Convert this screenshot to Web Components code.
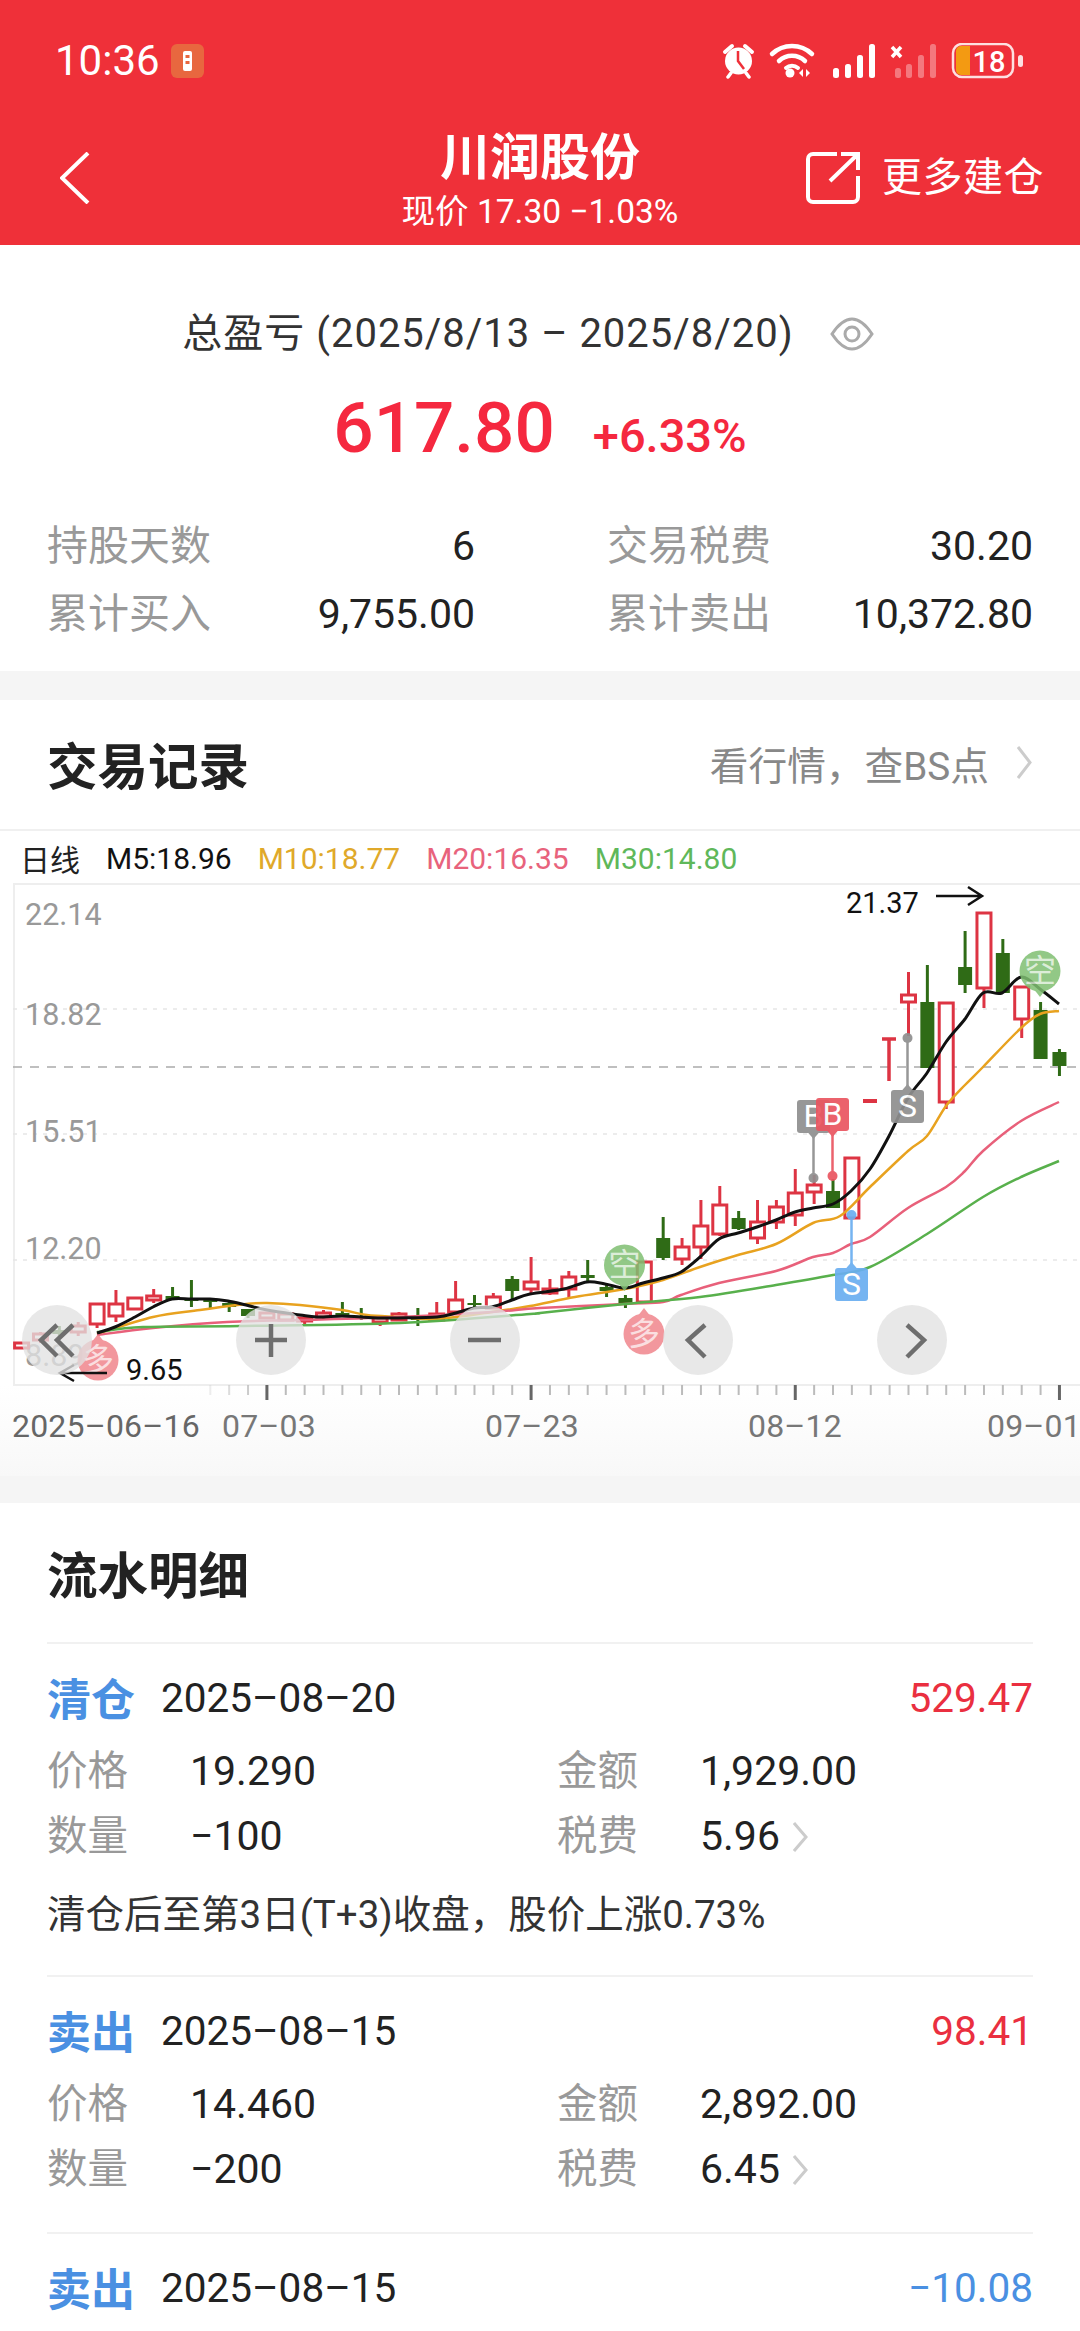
<!DOCTYPE html>
<html lang="zh">
<head>
<meta charset="utf-8">
<title>川润股份</title>
<style>
  html, body { margin: 0; background: #fff; }
  body {
    width: 1080px;
    height: 2331px;
    overflow: hidden;
    font-family: Roboto, "Noto Sans CJK SC", sans-serif;
    color: #222;
  }
  .gap { height: 29px; background: #f5f5f5; }
  .gap.low { height: 27px; }
</style>
</head>
<body>
  <app-header></app-header>
  <pnl-summary></pnl-summary>
  <div class="gap"></div>
  <section-head link="看行情，查BS点">交易记录</section-head>
  <kline-chart></kline-chart>
  <div class="gap low"></div>
  <flow-list>
    <flow-record bottom="37">
      <span slot="kind">清仓</span>
      <span slot="date">2025–08–20</span>
      <span slot="amount" style="color:#ea2f40">529.47</span>
      <span slot="price">19.290</span>
      <span slot="total">1,929.00</span>
      <span slot="qty">−100</span>
      <span slot="fee">5.96</span>
      <span slot="note">清仓后至第3日(T+3)收盘，股价上涨0.73%</span>
    </flow-record>
    <flow-record bottom="30">
      <span slot="kind">卖出</span>
      <span slot="date">2025–08–15</span>
      <span slot="amount" style="color:#ea2f40">98.41</span>
      <span slot="price">14.460</span>
      <span slot="total">2,892.00</span>
      <span slot="qty">−200</span>
      <span slot="fee">6.45</span>
    </flow-record>
    <flow-record head-only>
      <span slot="kind">卖出</span>
      <span slot="date">2025–08–15</span>
      <span slot="amount" style="color:#4a90e2">−10.08</span>
    </flow-record>
  </flow-list>

<script>
// top red block: status bar + title bar
const headerTemplate = document.createElement('template');
headerTemplate.innerHTML = `
  <style>
    :host { display: block; height: 245px; background: #ef3039; color: #fff; }
    .status { height: 122px; box-sizing: border-box; display: flex; align-items: center; padding: 0 57px 0 55px; }
    .time { font-size: 42px; line-height: 48px; }
    .note { margin-left: 11px; display: block; }
    .icons { margin-left: auto; display: flex; align-items: center; gap: 0; }
    svg { display: block; }
    .nav { display: grid; grid-template-columns: 1fr auto 1fr; height: 123px; }
    .back { padding: 30px 0 0 60px; }
    .mid { text-align: center; }
    .name { font-size: 50px; line-height: 58px; font-weight: 700; margin-top: 7px; }
    .sub { font-size: 33.5px; line-height: 40px; margin-top: 5px; }
    .more { display: flex; align-items: flex-start; justify-content: flex-end; padding: 30px 36px 0 0; gap: 22px; }
    .more span { font-size: 40px; line-height: 52px; letter-spacing: 0.5px; }
  </style>
  <div class="status">
    <span class="time">10:36</span>
    <svg class="note" width="33" height="34" viewBox="0 0 33 34">
      <rect width="33" height="34" rx="6" fill="#e8673f"/>
      <rect x="12" y="7" width="9" height="20" rx="2" fill="#fff"/>
      <rect x="14.5" y="11" width="4" height="3" fill="#e8673f"/>
      <rect x="14.5" y="17" width="4" height="3" fill="#e8673f"/>
    </svg>
    <div class="icons">
      <svg width="301" height="36" viewBox="722 44 301 36">
        <!-- alarm -->
        <path d="M725 53 l7-6" stroke="#fff" stroke-width="4" stroke-linecap="round"/>
        <path d="M752 53 l-7-6" stroke="#fff" stroke-width="4" stroke-linecap="round"/>
        <circle cx="738.5" cy="62" r="13.5" fill="#fff"/>
        <path d="M738 52 v10 l6 8" fill="none" stroke="#ef3039" stroke-width="2.5"/>
        <path d="M728 78 l3-4 M749 78 l-3-4" stroke="#fff" stroke-width="3.5" stroke-linecap="round"/>
        <!-- wifi -->
        <path d="M772 55 a29 29 0 0 1 40 0" fill="none" stroke="#fff" stroke-width="4.5" stroke-linecap="round"/>
        <path d="M779 62 a19 19 0 0 1 26 0" fill="none" stroke="#fff" stroke-width="4.5" stroke-linecap="round"/>
        <path d="M786 69 a9 9 0 0 1 12 0" fill="none" stroke="#fff" stroke-width="4" stroke-linecap="round"/>
        <circle cx="790" cy="74" r="4.5" fill="#fff"/>
        <path d="M803 70 l-4 4 4 4z M806 70 l4 4 -4 4z" fill="#fff"/>
        <!-- signal 1 -->
        <g fill="#fff">
          <rect x="833" y="69" width="6" height="10" rx="2.5"/>
          <rect x="845" y="65" width="6" height="14" rx="2.5"/>
          <rect x="857" y="56" width="6" height="23" rx="2.5"/>
          <rect x="869" y="45" width="6" height="34" rx="2.5"/>
        </g>
        <!-- signal 2, no service -->
        <g fill="#fff" opacity=".35">
          <rect x="895" y="69" width="6" height="10" rx="2.5"/>
          <rect x="906" y="65" width="6" height="14" rx="2.5"/>
          <rect x="918" y="56" width="6" height="23" rx="2.5"/>
          <rect x="930" y="45" width="6" height="34" rx="2.5"/>
        </g>
        <path d="M892 48 l9 10 M901 48 l-9 10" stroke="#fff" stroke-width="3.5"/>
        <!-- battery -->
        <rect x="953" y="45" width="60" height="33" rx="9" fill="none" stroke="#fff" stroke-opacity=".85" stroke-width="2.5"/>
        <path d="M956 52 a5 5 0 0 1 5-5 h9 v29 h-9 a5 5 0 0 1 -5-5z" fill="#f39a12"/>
        <rect x="1018" y="56" width="5" height="12" rx="2.5" fill="#fff" fill-opacity=".85"/>
        <text x="989" y="73" text-anchor="middle" font-size="29" font-weight="500" fill="#fff" font-family="Roboto, sans-serif">18</text>
      </svg>
    </div>
  </div>
  <div class="nav">
    <div class="back">
      <svg width="30" height="52" viewBox="0 0 30 52"><path d="M28 1 L2 26 L28 51" fill="none" stroke="#fff" stroke-width="4"/></svg>
    </div>
    <div class="mid">
      <div class="name">川润股份</div>
      <div class="sub">现价 17.30 −1.03%</div>
    </div>
    <div class="more">
      <svg width="54" height="52" viewBox="0 0 54 52">
        <path d="M31 2 H7 a5 5 0 0 0 -5 5 v38 a5 5 0 0 0 5 5 h40 a5 5 0 0 0 5-5 V24" fill="none" stroke="#fff" stroke-width="4"/>
        <path d="M24 29 L51 3 M35 2 H52 V18" fill="none" stroke="#fff" stroke-width="4"/>
      </svg>
      <span>更多建仓</span>
    </div>
  </div>`;

class AppHeader extends HTMLElement {
  constructor() {
    super();
    this.attachShadow({ mode: 'open' });
    this.shadowRoot.appendChild(headerTemplate.content.cloneNode(true));
  }
}
customElements.define('app-header', AppHeader);

// total profit block
const summaryTemplate = document.createElement('template');
summaryTemplate.innerHTML = `
  <style>
    :host { display: block; height: 426px; box-sizing: border-box; padding-top: 64px; background: #fff; }
    .range { display: flex; justify-content: center; align-items: center; gap: 36px; padding-right: 24px; font-size: 40px; line-height: 50px; letter-spacing: 1px; color: #333; }
    .money { display: flex; justify-content: center; align-items: baseline; gap: 38px; margin-top: 24px; height: 90px; color: #f5283f; font-weight: 500; }
    .big { font-size: 71px; line-height: 90px; }
    .pct { font-size: 47px; }
    .stats { display: grid; grid-template-columns: 428px 426px; column-gap: 132px; margin: 39px 47px 0 47px; }
    .cell { display: flex; justify-content: space-between; font-size: 41px; line-height: 68px; color: #222; }
    .cell i { font-style: normal; color: #999; }
  </style>
  <div class="range">
    <span>总盈亏 (2025/8/13 – 2025/8/20)</span>
    <svg width="44" height="34" viewBox="0 0 44 34">
      <path d="M2 17 C10 5 16 2 22 2 S34 5 42 17 C34 29 28 32 22 32 S10 29 2 17z" fill="none" stroke="#aaa" stroke-width="3"/>
      <circle cx="22" cy="17" r="7" fill="none" stroke="#aaa" stroke-width="3"/>
    </svg>
  </div>
  <div class="money"><span class="big">617.80</span><span class="pct">+6.33%</span></div>
  <div class="stats">
    <div class="cell"><i>持股天数</i><span>6</span></div>
    <div class="cell"><i>交易税费</i><span>30.20</span></div>
    <div class="cell"><i>累计买入</i><span>9,755.00</span></div>
    <div class="cell"><i>累计卖出</i><span>10,372.80</span></div>
  </div>`;

class PnlSummary extends HTMLElement {
  constructor() {
    super();
    this.attachShadow({ mode: 'open' });
    this.shadowRoot.appendChild(summaryTemplate.content.cloneNode(true));
  }
}
customElements.define('pnl-summary', PnlSummary);

// section title row, with optional link on the right
const headTemplate = document.createElement('template');
headTemplate.innerHTML = `
  <style>
    :host { display: flex; align-items: center; justify-content: space-between; height: 129px; box-sizing: border-box; padding: 0 48px 4px 47px; background: #fff; }
    .title { font-size: 50.5px; font-weight: 700; color: #222; }
    .link { display: flex; align-items: center; gap: 28px; font-size: 38.7px; color: #888; }
  </style>
  <div class="title"><slot></slot></div>
  <div class="link">
    <span class="txt"></span>
    <svg width="15" height="33" viewBox="0 0 15 33"><path d="M1 1 L13 16.5 L1 32" fill="none" stroke="#ccc" stroke-width="3"/></svg>
  </div>`;

class SectionHead extends HTMLElement {
  constructor() {
    super();
    this.attachShadow({ mode: 'open' });
    this.shadowRoot.appendChild(headTemplate.content.cloneNode(true));
    this.shadowRoot.querySelector('.txt').textContent = this.getAttribute('link');
  }
}
customElements.define('section-head', SectionHead);

// k-line data, in page pixels
// [index, colour, wick top, body top, body bottom, wick bottom]
const CANDLES = [
  [0,'r',1343,1343,1348,1348],[1,'r',1332,1334,1340,1343],[2,'g',1326,1330,1334,1338],[3,'r',1322,1326,1332,1336],
  [4,'r',1304,1304,1324,1328],[5,'r',1290,1304,1316,1322],[6,'r',1298,1298,1309,1309],[7,'r',1289,1296,1300,1303],
  [8,'g',1287,1296,1300,1300],[9,'g',1280,1299,1300,1307],[10,'g',1298,1300,1302,1308],[11,'g',1302,1303,1307,1312],
  [12,'g',1309,1309,1316,1318],[13,'r',1313,1313,1318,1318],[14,'r',1314,1314,1320,1320],[15,'r',1316,1318,1321,1324],
  [16,'r',1310,1313,1317,1320],[17,'g',1302,1313,1316,1317],[18,'g',1308,1316,1318,1320],[19,'r',1316,1318,1322,1326],
  [20,'r',1312,1314,1320,1320],[21,'g',1308,1316,1320,1326],[22,'r',1302,1314,1320,1320],[23,'r',1281,1300,1312,1312],
  [24,'g',1295,1303,1305,1308],[25,'r',1293,1297,1308,1308],[26,'g',1276,1279,1291,1300],[27,'r',1257,1282,1289,1293],
  [28,'r',1279,1289,1293,1295],[29,'r',1271,1277,1289,1297],[30,'g',1260,1275,1278,1283],[31,'g',1283,1287,1291,1297],
  [32,'g',1295,1298,1304,1308],[33,'r',1262,1262,1302,1302],[34,'g',1217,1238,1258,1260],[35,'r',1238,1247,1259,1265],
  [36,'r',1200,1226,1247,1259],[37,'r',1186,1205,1234,1236],[38,'g',1211,1218,1229,1230],[39,'r',1200,1222,1238,1244],
  [40,'r',1200,1207,1222,1229],[41,'r',1169,1193,1215,1226],[42,'r',1175,1185,1192,1204],[43,'g',1179,1191,1208,1208],
  [44,'r',1158,1158,1218,1218],[47,'r',972,995,1002,1036],[48,'g',965,1002,1068,1068],[49,'r',1003,1003,1102,1109],
  [50,'g',931,967,985,993],[51,'r',913,913,988,1008],[52,'g',939,953,993,993],[53,'r',987,987,1019,1038],
  [54,'g',1002,1010,1059,1059],[55,'g',1049,1052,1066,1076]
];
const MA_LINES = {
  '#e8a21f': '97,1334 153,1317 200,1310 246,1304 267,1303 300,1305 342,1310 367,1315 400,1317 437,1319 492,1312 530,1306 575,1297 625,1289 663,1280 700,1267 738,1255 776,1244 813,1223 840,1216 870,1187 908,1151 927,1136 946,1106 965,1085 983,1067 1021,1028 1040,1014 1059,1011',
  '#e8607a': '97,1335 153,1328 227,1322 300,1320 400,1317 492,1312 540,1308 625,1304 663,1302 681,1295 719,1283 776,1271 813,1257 833,1253 851,1244 870,1237 908,1208 946,1187 965,1171 983,1151 1021,1121 1059,1102',
  '#58b04c': '97,1332 143,1327 240,1326 400,1323 530,1314 540,1313 625,1304 700,1297 776,1285 833,1275 870,1267 927,1234 983,1197 1021,1177 1059,1161',
  '#111': '97,1333 115,1327 135,1317 153,1307 172,1299 191,1299 210,1299 228,1301 246,1305 267,1310 300,1315 317,1317 342,1316 361,1317 380,1318 398,1318 437,1317 456,1313 474,1308 492,1307 512,1300 530,1294 564,1289 587,1282 605,1284 625,1288 643,1283 663,1278 681,1272 700,1257 719,1239 738,1233 757,1227 776,1220 795,1212 813,1208 833,1204 851,1191 870,1169 889,1136 908,1098 927,1073 946,1042 965,1019 983,993 1002,993 1021,977 1040,989 1059,1004'
};
const CX = i => 21.6 + 18.87 * i;

// catmull-rom through the points, the chart lines are curves
function smoothPath(pts) {
  const p = pts.split(' ').map(s => s.split(',').map(Number));
  let d = `M${p[0][0]} ${p[0][1]}`;
  for (let i = 0; i < p.length - 1; i++) {
    const a = p[i - 1] || p[i], b = p[i], c = p[i + 1], e = p[i + 2] || c;
    const c1x = b[0] + (c[0] - a[0]) / 6, c1y = b[1] + (c[1] - a[1]) / 6;
    const c2x = c[0] - (e[0] - b[0]) / 6, c2y = c[1] - (e[1] - b[1]) / 6;
    d += `C${c1x.toFixed(1)} ${c1y.toFixed(1)} ${c2x.toFixed(1)} ${c2y.toFixed(1)} ${c[0]} ${c[1]}`;
  }
  return d;
}

function candleSvg([i, c, wt, bt, bb, wb]) {
  const x = CX(i);
  if (c === 'g') {
    return `<path d="M${x} ${wt}V${wb}" stroke="#2f6b16" stroke-width="3"/>` +
      `<rect x="${x - 7}" y="${bt}" width="14" height="${Math.max(bb - bt, 2)}" fill="#2f6b16"/>`;
  }
  return `<path d="M${x} ${wt}V${wb}" stroke="#dd3443" stroke-width="3"/>` +
    `<rect x="${x - 7}" y="${bt}" width="14" height="${Math.max(bb - bt, 2)}" fill="#fff" stroke="#dd3443" stroke-width="3"/>`;
}

function flagSvg(x, y, label, color, dotY, tipUp) {
  const cx = x + 16.5;
  const line = `<path d="M${cx} ${tipUp ? dotY : y + 33}V${tipUp ? y : dotY}" stroke="${color}" stroke-width="2.5"/>` +
    `<circle cx="${cx}" cy="${dotY}" r="5" fill="${color}"/>`;
  const tip = tipUp
    ? `<path d="M${cx - 6} ${y + 1} L${cx} ${y - 6} L${cx + 6} ${y + 1}z" fill="${color}"/>`
    : `<path d="M${cx - 6} ${y + 32} L${cx} ${y + 39} L${cx + 6} ${y + 32}z" fill="${color}"/>`;
  return `<g opacity=".92">${line}${tip}<rect x="${x}" y="${y}" width="33" height="33" rx="3" fill="${color}"/>` +
    `<text x="${cx}" y="${y + 27}" text-anchor="middle" font-size="32" fill="#fff">${label}</text></g>`;
}

function bubbleSvg(x, y, label, color, tipUp) {
  const tip = tipUp
    ? `<path d="M${x - 7} ${y - 17} L${x} ${y - 26} L${x + 7} ${y - 17}z" fill="${color}"/>`
    : `<path d="M${x - 7} ${y + 17} L${x} ${y + 26} L${x + 7} ${y + 17}z" fill="${color}"/>`;
  return `<g opacity=".85">${tip}<circle cx="${x}" cy="${y}" r="20.5" fill="${color}"/>` +
    `<text x="${x}" y="${y + 11}" text-anchor="middle" font-size="32" fill="#fff" fill-opacity=".7">${label}</text></g>`;
}

class KlineChart extends HTMLElement {
  constructor() {
    super();
    this.attachShadow({ mode: 'open' });
    const grid = [1009, 1134, 1260].map(y =>
      `<path d="M13 ${y}H1080" stroke="#e6e6e6" stroke-width="1.5" stroke-dasharray="4 6"/>`).join('');
    const lines = Object.entries(MA_LINES).map(([color, pts]) =>
      `<path d="${smoothPath(pts)}" fill="none" stroke="${color}" stroke-width="${color === '#111' ? 3 : 2.5}" stroke-linejoin="round"/>`).join('');
    let ticks = '';
    for (let i = 10; i <= 55; i++) {
      const major = i === 13 || i === 27 || i === 41 || i === 55;
      const op = major ? 1 : Math.min(1, (i - 9) / 4);
      ticks += `<path d="M${CX(i)} 1385V${major ? 1400 : 1395}" stroke="${major ? '#666' : '#bbb'}" stroke-width="${major ? 3 : 2}" opacity="${op}"/>`;
    }
    const yLabels = [['22.14', 925], ['18.82', 1025], ['15.51', 1142], ['12.20', 1259], ['8.89', 1366]]
      .map(([t, y]) => `<text x="25" y="${y}" font-size="30.5" fill="#999">${t}</text>`).join('');
    const xLabels = [['2025–06–16', 12, '#666'], ['07–03', 222, '#777'], ['07–23', 485, '#777'], ['08–12', 748, '#777'], ['09–01', 987, '#777']]
      .map(([t, x, c]) => `<text x="${x}" y="1437" font-size="32" fill="${c}" letter-spacing=".2">${t}</text>`).join('');
    const btn = x => `<circle cx="${x}" cy="1340" r="35" fill="#e2e2e2" fill-opacity=".78"/>`;
    const icon = d => `<path d="${d}" fill="none" stroke="#6e6e6e" stroke-width="4.5"/>`;

    this.shadowRoot.innerHTML = `
      <style>
        :host { display: block; background: #fff; border-top: 2px solid #f0f0f0; box-sizing: border-box; height: 647px; }
        .legend { display: flex; align-items: center; gap: 26px; height: 52px; padding: 2px 0 0 20px; box-sizing: border-box; font-size: 30px; color: #222; }
        svg { display: block; font-family: Roboto, "Noto Sans CJK SC", sans-serif; }
      </style>
      <div class="legend">
        <span>日线</span>
        <span style="color:#111">M5:18.96</span>
        <span style="color:#e0a92a">M10:18.77</span>
        <span style="color:#e8637c">M20:16.35</span>
        <span style="color:#5fb85a">M30:14.80</span>
      </div>
      <svg width="1080" height="593" viewBox="0 883 1080 593">
        <defs><linearGradient id="axis" x1="0" y1="0" x2="0" y2="1"><stop offset="0" stop-color="#fff"/><stop offset="1" stop-color="#f8f8f8"/></linearGradient></defs>
        <rect x="0" y="1385" width="1080" height="91" fill="url(#axis)"/>
        <path d="M1080 884H14V1385H1080" fill="none" stroke="#eee" stroke-width="2"/>
        ${grid}
        <path d="M13 1067H1080" stroke="#aaa" stroke-width="1.5" stroke-dasharray="9 8"/>
        ${yLabels}
        ${CANDLES.map(candleSvg).join('')}
        <path d="M863 1101H877" stroke="#dd3443" stroke-width="4"/>
        <path d="M882 1039H896 M889 1039V1081" stroke="#dd3443" stroke-width="3.5" fill="none"/>
        ${lines}
        ${bubbleSvg(624.5, 1265, '空', '#7fbf72', false)}
        ${bubbleSvg(1040, 971, '空', '#7fbf72', false)}
        ${bubbleSvg(644, 1334, '多', '#f0868d', true)}
        ${bubbleSvg(98, 1360, '多', '#f0868d', true)}
        ${flagSvg(797, 1100, 'B', '#8f8f8f', 1178, false)}
        ${flagSvg(816, 1098, 'B', '#ea5560', 1176, false)}
        ${flagSvg(891, 1090, 'S', '#8f8f8f', 1038, true)}
        ${flagSvg(835, 1268, 'S', '#6aaef0', 1215, true)}
        <text x="846" y="913" font-size="29" fill="#111">21.37</text>
        <path d="M936 896H982 M968 887L982 896L968 905" fill="none" stroke="#111" stroke-width="2.5"/>
        <text x="126" y="1380" font-size="29" fill="#111">9.65</text>
        <path d="M107 1373H60 M74 1365L60 1373L74 1381" fill="none" stroke="#111" stroke-width="2.5"/>
        ${btn(57)}${btn(271)}${btn(485)}${btn(698)}${btn(912)}
        ${icon('M57 1325L41 1340L57 1356 M73 1325L57 1340L73 1356')}
        ${icon('M255 1340H287 M271 1324V1357')}
        ${icon('M468 1340H501')}
        ${icon('M705 1325L688 1340L705 1357')}
        ${icon('M907 1325L924 1340L907 1357')}
        ${ticks}
        ${xLabels}
      </svg>`;
  }
}
customElements.define('kline-chart', KlineChart);

// list block with its title
const listTemplate = document.createElement('template');
listTemplate.innerHTML = `
  <style>
    :host { display: block; background: #fff; padding: 0 47px 0 47px; }
    .title { height: 139px; box-sizing: border-box; padding-bottom: 2px; display: flex; align-items: center; font-size: 50.5px; font-weight: 700; color: #222; }
  </style>
  <div class="title">流水明细</div>
  <slot></slot>`;

class FlowList extends HTMLElement {
  constructor() {
    super();
    this.attachShadow({ mode: 'open' });
    this.shadowRoot.appendChild(listTemplate.content.cloneNode(true));
  }
}
customElements.define('flow-list', FlowList);

// one trade row
const recordTemplate = document.createElement('template');
recordTemplate.innerHTML = `
  <style>
    :host { display: block; border-top: 2px solid #f1f1f1; padding-top: 26px; font-size: 40.5px; color: #222; }
    .head { display: flex; align-items: center; height: 56px; }
    .kind { font-size: 44px; font-weight: 700; color: #4a90e2; margin-right: 26px; line-height: 50px; margin-top: 6px; }
    .amount { margin-left: auto; }
    .grid { display: grid; grid-template-columns: 143px 367px 143px 1fr; margin-top: 13px; line-height: 65px; font-size: 41px; }
    .grid i { font-style: normal; color: #999; font-size: 40.5px; }
    .fee { display: flex; align-items: center; gap: 13px; }
    .note { font-size: 38.5px; line-height: 46px; color: #333; margin-top: 23px; }
    .note:not(.on) { display: none; }
    :host([head-only]) .grid { display: none; }
  </style>
  <div class="head">
    <span class="kind"><slot name="kind"></slot></span>
    <span><slot name="date"></slot></span>
    <span class="amount"><slot name="amount"></slot></span>
  </div>
  <div class="grid">
    <i>价格</i><span><slot name="price"></slot></span>
    <i>金额</i><span><slot name="total"></slot></span>
    <i>数量</i><span><slot name="qty"></slot></span>
    <i>税费</i>
    <span class="fee"><slot name="fee"></slot>
      <svg width="15" height="30" viewBox="0 0 15 30"><path d="M1 1 L13 15 L1 29" fill="none" stroke="#ccc" stroke-width="3"/></svg>
    </span>
  </div>
  <div class="note"><slot name="note"></slot></div>`;

class FlowRecord extends HTMLElement {
  constructor() {
    super();
    this.attachShadow({ mode: 'open' });
    this.shadowRoot.appendChild(recordTemplate.content.cloneNode(true));
  }
  connectedCallback() {
    if (this.hasAttribute('bottom')) this.style.paddingBottom = this.getAttribute('bottom') + 'px';
    if (this.querySelector('[slot=note]')) this.shadowRoot.querySelector('.note').classList.add('on');
  }
}
customElements.define('flow-record', FlowRecord);
</script>
</body>
</html>
